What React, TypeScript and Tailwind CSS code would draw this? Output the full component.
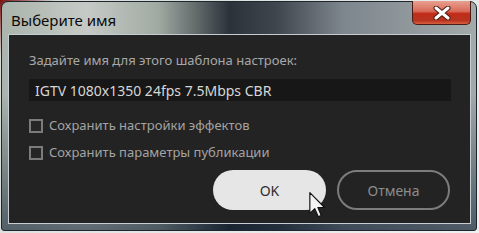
import React from 'react'

const uiFont = { fontFamily: '"Noto Sans", "Open Sans", sans-serif' }

function Checkbox({ label }: { label: string }) {
  return (
    <label className="flex items-center gap-[6px] text-[13px] leading-[19px] text-[#a3a3a3]">
      <span className="h-[14px] w-[14px] border-2 border-[#7b7b7b] bg-[#262626]" />
      <span>{label}</span>
    </label>
  )
}

function CloseGlyph() {
  return (
    <svg width="18" height="14" viewBox="0 0 18 14" aria-hidden="true">
      <path d="M3 2L15 12M15 2L3 12" stroke="#4a1a14" strokeWidth="5" strokeLinecap="round" />
      <path d="M3 2L15 12M15 2L3 12" stroke="#ffffff" strokeWidth="3" strokeLinecap="round" />
    </svg>
  )
}

function Cursor() {
  return (
    <svg
      className="absolute left-[309px] top-[192px]"
      width="16"
      height="26"
      viewBox="0 0 12 20"
      aria-hidden="true"
    >
      <path
        d="M0.5 0.5L0.5 16.5L4.3 12.8L7 19L9.3 18L6.7 11.9L11.8 11.9Z"
        fill="#f4f4f4"
        stroke="#111111"
        strokeWidth="0.9"
        strokeLinejoin="round"
      />
    </svg>
  )
}

export default function App() {
  return (
    <div
      className="relative h-[233px] w-[479px] overflow-hidden bg-[linear-gradient(135deg,#7a1010_0%,#d8dcd8_8%,#eef0f0_100%)]"
      style={uiFont}
    >
      <div className="ml-[1px] mt-[1px] flex h-[230px] w-[476px] flex-col rounded-t-[7px] rounded-b-[3px] border border-[#1e2630] bg-[linear-gradient(180deg,rgba(0,0,0,0)_0%,rgba(0,0,0,0)_40%,rgba(10,25,45,0.55)_100%),linear-gradient(90deg,#aab4ac_0%,#c6cac6_18%,#a0aaa2_33%,#2c323a_48%,#40464e_58%,#7e868e_72%,#a2aaaa_100%)] pl-[6px] pr-[5px] pb-[6px]">
        {/* title bar */}
        <div className="flex h-[32px] items-start justify-between">
          <div className="pl-[3px] pt-[9px] text-[15px] leading-[18px] text-[#0a0a0a]">Выберите имя</div>
          <button className="-mt-[1px] flex h-[24px] w-[59px] items-center justify-center rounded-b-[5px] border border-t-0 border-[#4a1c18] bg-[linear-gradient(180deg,#e8a090_0%,#d86a58_45%,#c02c18_55%,#b83420_85%,#d86040_100%)]">
            <CloseGlyph />
          </button>
        </div>

        {/* content */}
        <div className="flex flex-1 flex-col border border-[#c4ccd4] bg-[#232323] px-[20px] pt-[16px]">
          <div className="text-[13px] leading-[18px] text-[#a8a8a8]">Задайте имя для этого шаблона настроек:</div>
          <div className="mt-[10px] flex h-[22px] w-[422px] items-center bg-[#171717] px-[6px] text-[14px] text-[#d6d6d6]">
            IGTV 1080x1350 24fps 7.5Mbps CBR
          </div>
          <div className="mt-[15px] flex flex-col gap-[8px]">
            <Checkbox label="Сохранить настройки эффектов" />
            <Checkbox label="Сохранить параметры публикации" />
          </div>
          <div className="mt-[8px] flex justify-end gap-[11px]">
            <button className="flex h-[40px] w-[113px] items-center justify-center rounded-full bg-[#e6e6e6] text-[14px] text-[#2e2e2e]">
              OK
            </button>
            <button className="flex h-[40px] w-[113px] items-center justify-center rounded-full border-2 border-[#7c7c7c] text-[14px] text-[#8c8c8c]">
              Отмена
            </button>
          </div>
        </div>
      </div>
      <Cursor />
    </div>
  )
}
